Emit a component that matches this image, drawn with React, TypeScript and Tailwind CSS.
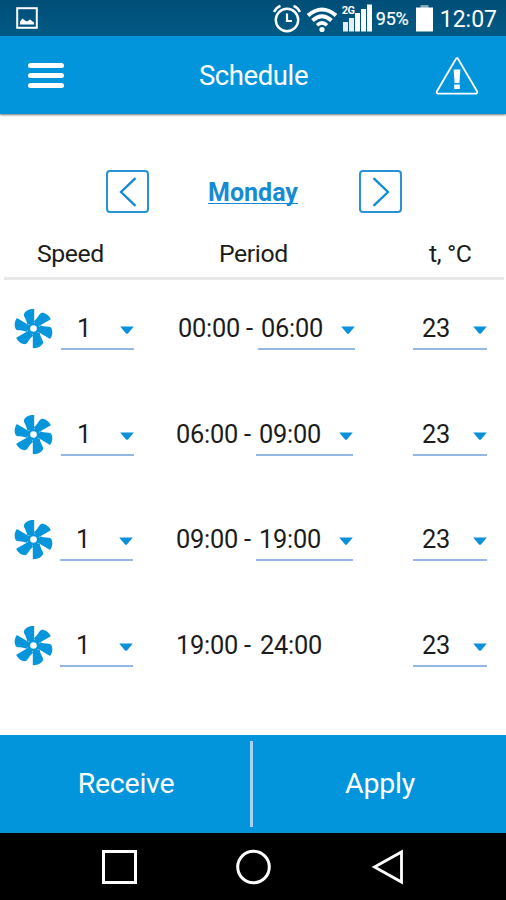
import { useState } from 'react'

type Slot = {
  speed: string
  from: string
  to: string
  temp: string
  // last period always runs to midnight, so it has no dropdown
  fixedEnd?: boolean
  speedClass: string
  periodClass: string
}

const SLOTS: Slot[] = [
  { speed: '1', from: '00:00', to: '06:00', temp: '23', speedClass: 'ml-[8px]', periodClass: 'ml-[178px]' },
  { speed: '1', from: '06:00', to: '09:00', temp: '23', speedClass: 'ml-[8px]', periodClass: 'ml-[176px]' },
  { speed: '1', from: '09:00', to: '19:00', temp: '23', speedClass: 'ml-[7px]', periodClass: 'ml-[176px]' },
  { speed: '1', from: '19:00', to: '24:00', temp: '23', fixedEnd: true, speedClass: 'ml-[7px]', periodClass: 'ml-[176px]' },
]

const DAYS = ['Monday', 'Tuesday', 'Wednesday', 'Thursday', 'Friday', 'Saturday', 'Sunday']

function FanIcon() {
  return (
    <svg className="mt-px h-10 w-10 shrink-0" viewBox="-20.5 -19.5 40 40" fill="#0795dc">
      {[0, 60, 120, 180, 240, 300].map(angle => (
        <path
          key={angle}
          transform={`rotate(${angle})`}
          d="M0.7 -19.6C-4 -20 -8.2 -17.8 -9.6 -14.6C-9.9 -11.4 -7.2 -10.4 -6.2 -4L0.7 -4Z"
        />
      ))}
      <circle r="5.8" />
      <circle r="3.3" fill="#fff" />
    </svg>
  )
}

function Caret() {
  return (
    <svg className="mt-[4px] h-[8px] w-[14px] shrink-0" viewBox="0 0 14 8">
      <path d="M0.2 0.4H13.8L8.2 7.2Q7 8.2 5.8 7.2Z" fill="#0b90da" />
    </svg>
  )
}

function Select({ value, className }: { value: string; className: string }) {
  return (
    <button className={`flex h-[42px] shrink-0 items-center justify-between border-b-2 border-[#95b7e3] ${className}`}>
      <span className="mt-[2px]">{value}</span>
      <Caret />
    </button>
  )
}

function StatusBar() {
  return (
    <div className="flex h-9 items-center bg-gradient-to-b from-[#004e77] to-[#005a85] pl-4 pr-[9px] text-white">
      <svg className="h-[22px] w-[22px]" viewBox="0 0 22 22">
        <rect x="1.2" y="1.2" width="19.6" height="19.6" fill="none" stroke="#fff" strokeWidth="2" />
        <path d="M4 17.5V14.5L6.5 11.5L9 13.5L11 14.5L14 12.5L18 15.5V17.5Z" fill="#fff" />
      </svg>
      <div className="ml-auto flex items-center tracking-normal">
        <svg className="h-[30px] w-[28px]" viewBox="0 0 28 30" fill="none" stroke="#fff">
          <circle cx="14" cy="17" r="11.2" strokeWidth="2.4" />
          <path d="M14 10.5V18H19" strokeWidth="2.2" />
          <path d="M1 9Q3 4.5 7.5 2.8M27 9Q25 4.5 20.5 2.8" strokeWidth="2.4" />
        </svg>
        <svg className="ml-[5px] mt-[3px] h-[26px] w-[32px]" viewBox="0 0 32 26" fill="none" stroke="#fff">
          <path d="M2 8.5Q16 -3.5 30 8.5" strokeWidth="4" />
          <path d="M6.5 13.5Q16 5 25.5 13.5" strokeWidth="3.8" />
          <path d="M11 18.2Q16 13.6 21 18.2" strokeWidth="3.6" />
          <circle cx="16" cy="22.5" r="2.6" fill="#fff" stroke="none" />
        </svg>
        <div className="relative ml-[4px] h-[28px] w-[31px]">
          <svg className="h-[28px] w-[31px]" viewBox="0 0 31 28" fill="#fff">
            <path d="M1 18h5v9.5h-5zM7 14h5v13.5h-5z" opacity=".9" />
            <path d="M13 9h5v18.5h-5zM19 5h5v22.5h-5zM25 0.5h5v27h-5z" />
          </svg>
          <span className="absolute left-0 top-[1px] text-[11px] font-bold leading-none tracking-[-0.6px]">2G</span>
        </div>
        <span className="ml-[3px] mt-[2px] w-[34px] text-[18px] leading-none tracking-[-0.2px] [-webkit-text-stroke:0.2px_white]">95%</span>
        <svg className="ml-[5px] h-[28px] w-[19px]" viewBox="0 0 19 28" fill="#fff">
          <path d="M5.5 1h8v3h-8z" opacity=".5" />
          <path d="M1 3.5h17v24h-17z" />
        </svg>
        <span className="ml-[6px] mt-[2px] text-[23px] leading-none">12:07</span>
      </div>
    </div>
  )
}

function Header() {
  return (
    <header className="z-10 flex h-[78px] items-center justify-between bg-[#0295dc] pl-7 pr-[27px] text-white shadow-[0_1px_2px_rgba(0,0,0,0.55)]">
      <button className="flex w-[44px] flex-col gap-[5px]">
        <span className="h-[5px] w-9 rounded-sm bg-white" />
        <span className="h-[5px] w-9 rounded-sm bg-white" />
        <span className="h-[5px] w-9 rounded-sm bg-white" />
      </button>
      <h1 className="mt-[2px] text-[27.5px] leading-none tracking-[-0.4px]">Schedule</h1>
      <svg className="mt-px h-[40px] w-[44px]" viewBox="0 0 44 40">
        <path
          d="M20.7 3.2Q22 1.2 23.3 3.2L42 35.2Q43 37.6 40.5 37.6H3.5Q1 37.6 2 35.2Z"
          fill="none"
          stroke="#fff"
          strokeWidth="1.8"
        />
        <path d="M18.6 13.5H25.4L24.4 27H19.6ZM19.2 28.5h5.6v4.5h-5.6z" fill="#fff" />
      </svg>
    </header>
  )
}

function DayPicker() {
  const [day, setDay] = useState(0)
  const step = (by: number) => setDay((day + by + DAYS.length) % DAYS.length)
  const buttonClass = 'flex h-[43px] w-[43px] items-center justify-center rounded-[4px] border-2 border-[#2b91d5]'

  return (
    <div className="mt-14 flex items-center justify-between pl-[106px] pr-[104px]">
      <button className={buttonClass} onClick={() => step(-1)}>
        <svg className="h-[30px] w-[18px]" viewBox="0 0 18 30" fill="none" stroke="#1289d4" strokeWidth="2.3">
          <path d="M16.5 1.2L2 15L16.5 28.8" />
        </svg>
      </button>
      <span className="mr-[2px] mt-[2px] text-[25px] font-bold leading-none tracking-normal text-[#168bd4] underline decoration-1 underline-offset-[2px] [text-decoration-skip-ink:none]">
        {DAYS[day]}
      </span>
      <button className={buttonClass} onClick={() => step(1)}>
        <svg className="h-[30px] w-[18px]" viewBox="0 0 18 30" fill="none" stroke="#1289d4" strokeWidth="2.3">
          <path d="M1.5 1.2L16 15L1.5 28.8" />
        </svg>
      </button>
    </div>
  )
}

function SlotRow({ slot }: { slot: Slot }) {
  return (
    <div className="flex h-[105.6px] items-start">
      <div className="grid w-full grid-cols-[0px_413px_1fr]">
        <div className="flex w-[140px] items-start pl-[13px]">
          <FanIcon />
          <Select value={slot.speed} className={`w-[73px] pl-[16px] ${slot.speedClass}`} />
        </div>
        <div className={`flex ${slot.periodClass}`}>
          <span className="mt-px flex h-10 w-[80px] items-center whitespace-pre">{slot.from} -</span>
          {slot.fixedEnd ? (
            <span className="mt-px flex h-10 items-center pl-[4px]">{slot.to}</span>
          ) : (
            <Select value={slot.to} className="w-[97px] pl-[3px]" />
          )}
        </div>
        <Select value={slot.temp} className="w-[74px] pl-[9px]" />
      </div>
    </div>
  )
}

function NavBar() {
  return (
    <nav className="flex h-[67px] items-center justify-between bg-black pl-[100px] pr-[102px]">
      <svg className="h-[36px] w-[37px]" viewBox="0 0 37 36" fill="none" stroke="#fff" strokeWidth="3">
        <rect x="3.5" y="2.5" width="32" height="31" />
      </svg>
      <svg className="h-[36px] w-[36px]" viewBox="0 0 36 36" fill="none" stroke="#fff" strokeWidth="3">
        <circle cx="17.5" cy="18" r="15.8" />
      </svg>
      <svg className="h-[36px] w-[34px]" viewBox="0 0 34 36" fill="none" stroke="#fff" strokeWidth="2.8">
        <path d="M31.5 3V33L4.5 18Z" />
      </svg>
    </nav>
  )
}

export default function App() {
  return (
    <div className="flex h-[900px] w-[506px] flex-col overflow-hidden bg-white font-[Roboto,sans-serif] text-[25.4px] leading-none tracking-[-0.25px] text-[#1c1c1c]">
      <StatusBar />
      <Header />

      <main className="flex-1">
        <DayPicker />
        <div className="ml-1 mr-[2px] mt-[22px] grid h-[45px] grid-cols-[182px_210px_1fr] items-center border-b-[3px] border-[#e8e8e8] pb-[4px] pl-[33px] text-[24.8px] tracking-[-0.4px]">
          <span>Speed</span>
          <span>Period</span>
          <span>t, °C</span>
        </div>
        <div className="mt-[28px]">
          {SLOTS.map(slot => (
            <SlotRow key={slot.from} slot={slot} />
          ))}
        </div>
      </main>

      <footer className="flex h-[98px] shrink-0 items-center bg-[#0295dc] text-[28.5px] text-white">
        <button className="h-full w-[250px] pl-[2px] pt-[1px]">Receive</button>
        <span className="h-[86px] w-[3px] bg-[#a9d3f5]" />
        <button className="h-full flex-1 pl-[1px] pt-[1px]">Apply</button>
      </footer>
      <NavBar />
    </div>
  )
}
